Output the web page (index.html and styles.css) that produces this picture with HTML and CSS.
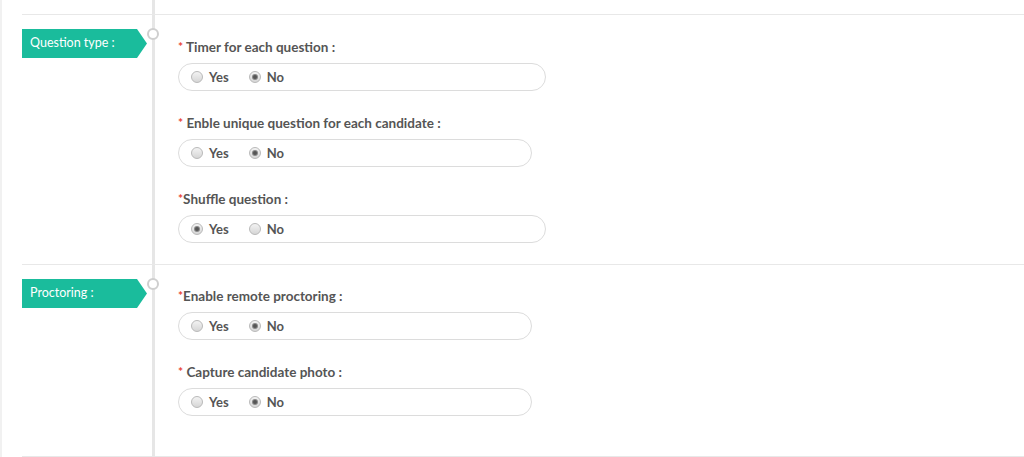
FILE: index.html
```html
<!DOCTYPE html>
<html>
<head>
<meta charset="utf-8">
<link rel="stylesheet" href="styles.css">
</head>
<body>
<div class="page">
  <section class="section">
    <div class="side"><div class="tag">Question type :</div></div>
    <span class="node"></span>
    <div class="fields">
      <div class="field">
        <div class="label"><span class="req">*</span> Timer for each question :</div>
        <div class="pill wide">
          <span class="opt"><span class="radio"></span>Yes</span>
          <span class="opt"><span class="radio on"></span>No</span>
        </div>
      </div>
      <div class="field">
        <div class="label"><span class="req">*</span> Enble unique question for each candidate :</div>
        <div class="pill narrow">
          <span class="opt"><span class="radio"></span>Yes</span>
          <span class="opt"><span class="radio on"></span>No</span>
        </div>
      </div>
      <div class="field">
        <div class="label"><span class="req">*</span>Shuffle question :</div>
        <div class="pill wide">
          <span class="opt"><span class="radio on"></span>Yes</span>
          <span class="opt"><span class="radio"></span>No</span>
        </div>
      </div>
    </div>
  </section>
  <section class="section last">
    <div class="side"><div class="tag">Proctoring :</div></div>
    <span class="node"></span>
    <div class="fields">
      <div class="field">
        <div class="label"><span class="req">*</span>Enable remote proctoring :</div>
        <div class="pill narrow">
          <span class="opt"><span class="radio"></span>Yes</span>
          <span class="opt"><span class="radio on"></span>No</span>
        </div>
      </div>
      <div class="field">
        <div class="label"><span class="req">*</span> Capture candidate photo :</div>
        <div class="pill narrow">
          <span class="opt"><span class="radio"></span>Yes</span>
          <span class="opt"><span class="radio on"></span>No</span>
        </div>
      </div>
    </div>
  </section>
  <div class="end"></div>
</div>
</body>
</html>
```
FILE: styles.css
```css
html, body {
  margin: 0;
  padding: 0;
  background: #fff;
}
body {
  font-family: Lato, "Open Sans", Arial, sans-serif;
  color: #555;
  width: 1024px;
  height: 457px;
  overflow: hidden;
}
.page {
  position: relative;
  border-left: 2px solid #f1f1f1;
  padding-left: 20px;
  padding-top: 14px;
  height: 443px;
}
.page::before {
  content: "";
  position: absolute;
  left: 150px;
  top: 0;
  bottom: 0;
  width: 3px;
  background: #e6e6e6;
}
.section {
  position: relative;
  display: flex;
  border-top: 1px solid #e8e8e8;
  padding-top: 23px;
  padding-bottom: 21px;
}
.section.last {
  padding-top: 22px;
  padding-bottom: 40px;
}
.end {
  border-top: 1px solid #e8e8e8;
}
.side {
  width: 156px;
  flex: none;
}
.tag {
  margin-top: -9px;
  width: 125px;
  height: 29px;
  box-sizing: border-box;
  padding-left: 8px;
  line-height: 27px;
  background: #1abc9c;
  color: #fff;
  font-size: 12.5px;
  clip-path: polygon(0 0, 115px 0, 125px 50%, 115px 100%, 0 100%);
}
.section.last .tag {
  margin-top: -8px;
}
.node {
  position: absolute;
  left: 125px;
  top: 13px;
  width: 8px;
  height: 8px;
  border: 2px solid #cfcfcf;
  border-radius: 50%;
  background: #fff;
}
.fields {
  display: flex;
  flex-direction: column;
  gap: 23px;
}
.label {
  font-size: 13.5px;
  font-weight: 700;
  line-height: 18px;
  color: #555;
  margin-bottom: 7px;
}
.req {
  color: #ea4335;
  font-weight: 700;
  font-size: 12px;
  vertical-align: 1px;
}
.pill {
  height: 28px;
  box-sizing: border-box;
  border: 1px solid #dcdcdc;
  border-radius: 14px;
  display: flex;
  align-items: center;
  padding-left: 12px;
  gap: 20px;
}
.pill.wide { width: 368px; }
.pill.narrow { width: 354px; }
.opt {
  display: flex;
  align-items: center;
  gap: 6px;
  font-size: 13px;
  font-weight: 700;
  color: #555;
}
.radio {
  width: 12px;
  height: 12px;
  box-sizing: border-box;
  border: 1px solid #b9b9b9;
  border-radius: 50%;
  background: linear-gradient(#f3f3f3, #d6d6d6);
  position: relative;
}
.radio.on::after {
  content: "";
  position: absolute;
  left: 3px;
  top: 3px;
  width: 4px;
  height: 4px;
  border-radius: 50%;
  background: #555;
  box-shadow: 0 0 0 1px #888;
}
```
